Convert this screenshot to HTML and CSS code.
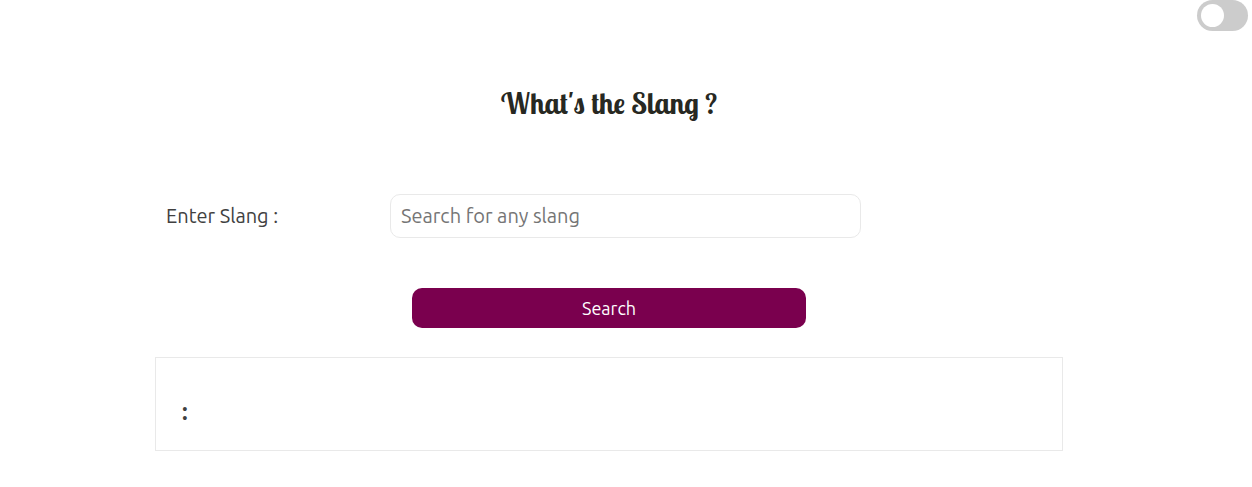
FILE: index.html
```html
<!DOCTYPE html>
<html lang="en">
<head>
<meta charset="utf-8">
<meta name="viewport" content="width=device-width, initial-scale=1">
<title>What's the Slang ?</title>
<link rel="stylesheet" href="styles.css">
</head>
<body>
<header class="topbar">
  <input class="switch" type="checkbox" role="switch" aria-label="Dark mode">
</header>
<main class="page">
  <h1 class="title">What's the Slang ?</h1>
  <form class="search">
    <div class="field">
      <label class="label" for="slang">Enter Slang :</label>
      <input class="input" id="slang" type="text" placeholder="Search for any slang">
    </div>
    <button class="button" type="button">Search</button>
  </form>
  <section class="result">
    <h2 class="term">:</h2>
  </section>
</main>
</body>
</html>
```
FILE: styles.css
```css
* {
  box-sizing: border-box;
}

body {
  margin: 0;
  background: #fff;
  color: #404040;
  font-family: Ubuntu, "Open Sans", "Noto Sans", sans-serif;
}

.topbar {
  display: flex;
  justify-content: flex-end;
  padding-right: 4px;
}

.switch {
  appearance: none;
  display: flex;
  align-items: center;
  width: 51px;
  height: 31px;
  margin: 0;
  padding: 4px;
  border-radius: 16px;
  background: #ccc;
  cursor: pointer;
}

.switch::before {
  content: "";
  width: 23px;
  height: 23px;
  border-radius: 50%;
  background: #fff;
}

.switch:checked {
  background: #7a004e;
}

.switch:checked::before {
  margin-left: auto;
}

.page {
  padding: 0 189px 0 155px;
}

.title {
  margin: 0;
  padding-top: 52px;
  color: #272822;
  font-family: "Lobster Two", Lobster, "Liberation Serif", serif;
  font-size: 29px;
  font-weight: 700;
  line-height: 40px;
  text-align: center;
}

.search {
  display: flex;
  flex-direction: column;
  align-items: center;
  gap: 50px;
  margin-top: 71px;
}

.field {
  display: grid;
  grid-template-columns: 224px 7fr 3fr;
  align-items: center;
  width: 100%;
  padding-left: 11px;
}

.label {
  padding-bottom: 2px;
  font-size: 20px;
}

.input {
  width: 100%;
  height: 44px;
  padding: 0 10px 2px;
  border: 1px solid #e9e9e9;
  border-radius: 10px;
  color: #404040;
  font: inherit;
  font-size: 20px;
}

.input::placeholder {
  color: #757575;
}

.button {
  width: 394px;
  max-width: 100%;
  height: 40px;
  border: 0;
  border-radius: 10px;
  background: #7a004e;
  color: #fff;
  font: inherit;
  font-size: 18px;
  cursor: pointer;
}

.result {
  margin-top: 29px;
  padding: 36px 26px 20px;
  border: 1px solid #e9e9e9;
}

.term {
  margin: 0;
  font-size: 23px;
  line-height: 36px;
}
```
